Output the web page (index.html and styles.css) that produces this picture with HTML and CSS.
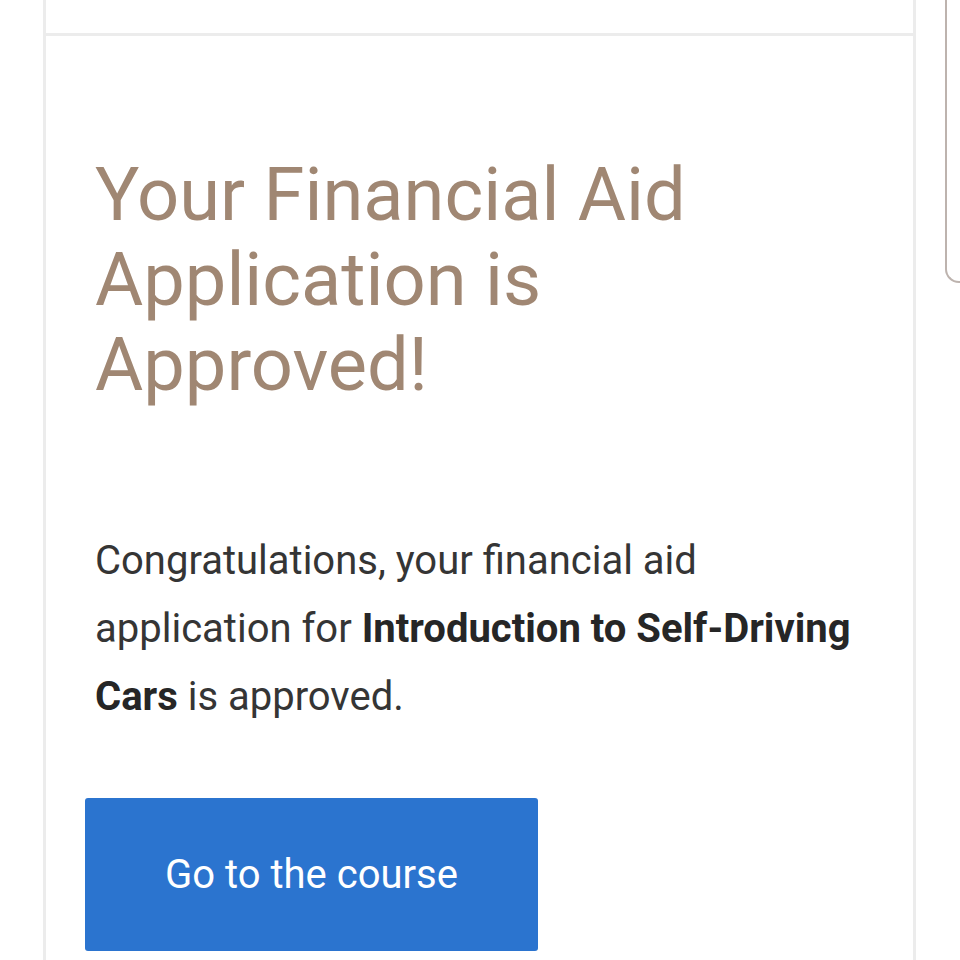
FILE: index.html
```html
<!DOCTYPE html>
<html lang="en">
<head>
<meta charset="utf-8">
<title>Financial Aid Approved</title>
<link rel="stylesheet" href="styles.css">
</head>
<body>
<div class="page">
  <div class="column">
    <div class="card card-top"></div>
    <div class="card card-main">
      <h1 class="title">Your Financial Aid Application is Approved!</h1>
      <p class="message">Congratulations, your financial aid application for <strong>Introduction to Self&#8209;Driving Cars</strong> is approved.</p>
      <a class="button" href="#">Go to the course</a>
    </div>
  </div>
  <div class="side">
    <div class="side-panel"></div>
  </div>
</div>
</body>
</html>
```
FILE: styles.css
```css
html, body {
  margin: 0;
  padding: 0;
  background: #ffffff;
}
body {
  font-family: Roboto, "Liberation Sans", Arial, sans-serif;
  overflow: hidden;
  height: 960px;
}
.page {
  display: flex;
  align-items: flex-start;
  padding-left: 43px;
  gap: 29px;
}
.column {
  width: 873px;
  display: flex;
  flex-direction: column;
}
.card {
  box-sizing: border-box;
  background: #fff;
  border-left: 3px solid #ececec;
  border-right: 3px solid #ececec;
}
.card-top {
  height: 36px;
  border-bottom: 3px solid #ececec;
}
.card-main {
  padding: 116px 43px 40px 49px;
  min-height: 960px;
}
.title {
  margin: 0;
  font-weight: 400;
  font-size: 74px;
  line-height: 85px;
  color: #a08773;
}
.message {
  margin: 120px 0 0 0;
  font-size: 40px;
  line-height: 68px;
  color: #353535;
}
.message strong {
  font-weight: 700;
  color: #262626;
}
.button {
  display: flex;
  align-items: center;
  justify-content: center;
  width: 453px;
  height: 153px;
  margin: 67px 0 0 -10px;
  background: #2b74cf;
  border-radius: 3px;
  color: #ffffff;
  font-size: 40px;
  text-decoration: none;
}
.side {
  flex: 1;
}
.side-panel {
  height: 283px;
  border-left: 2px solid #bdb3ae;
  border-bottom: 2px solid #bdb3ae;
  border-bottom-left-radius: 14px;
  box-sizing: border-box;
}
```
